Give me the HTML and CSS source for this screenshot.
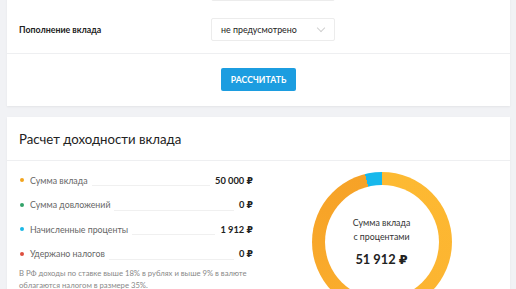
FILE: index.html
```html
<!DOCTYPE html>
<html lang="ru">
<head>
  <meta charset="UTF-8" />
  <meta name="viewport" content="width=device-width, initial-scale=1.0"/>
  <title>Депозитный калькулятор</title>
  <link rel="stylesheet" href="styles.css">
</head>
<body>
  <div class="card calc-card">
    <div class="form-rows">
      <div class="form-row">
        <span class="form-label"></span>
        <div class="select select-prev"></div>
      </div>
      <div class="form-row">
        <label class="form-label">Пополнение вклада</label>
        <div class="select">не предусмотрено<span class="chevron"></span></div>
      </div>
    </div>
    <div class="calc-actions">
      <button type="button" class="calc-button">Рассчитать</button>
    </div>
  </div>

  <div class="card result-card">
    <h2 class="result-title">Расчет доходности вклада</h2>
    <div class="result-body">
      <div class="result-list">
        <div class="result-row">
          <span class="dot dot-orange"></span>
          <span class="result-label">Сумма вклада</span>
          <span class="result-line"></span>
          <span class="result-value">50 000 ₽</span>
        </div>
        <div class="result-row">
          <span class="dot dot-green"></span>
          <span class="result-label">Сумма довложений</span>
          <span class="result-line"></span>
          <span class="result-value">0 ₽</span>
        </div>
        <div class="result-row">
          <span class="dot dot-blue"></span>
          <span class="result-label">Начисленные проценты</span>
          <span class="result-line"></span>
          <span class="result-value">1 912 ₽</span>
        </div>
        <div class="result-row">
          <span class="dot dot-red"></span>
          <span class="result-label">Удержано налогов</span>
          <span class="result-line"></span>
          <span class="result-value">0 ₽</span>
        </div>
        <p class="result-note">В РФ доходы по ставке выше 18% в рублях и выше 9% в валюте облагаются налогом в размере 35%.</p>
      </div>
      <div class="chart-col">
        <div class="donut">
          <div class="donut-inner">
            <span class="donut-caption">Сумма вклада<br>с процентами</span>
            <span class="donut-total">51 912 ₽</span>
          </div>
        </div>
      </div>
    </div>
  </div>
</body>
</html>
```

FILE: styles.css
```css
body {
  margin: 0;
  padding: 0 6px 20px 7px;
  background: #f1f2f5;
  font-family: 'Lato', 'DejaVu Sans', sans-serif;
  color: #222;
}

.card {
  background: #fff;
  box-shadow: 0 1px 2px rgba(0, 0, 0, 0.06);
}

.calc-card {
  margin-top: -22px;
}

.form-rows {
  display: flex;
  flex-direction: column;
  gap: 17px;
  padding: 0 12px 12px;
}

.form-row {
  display: flex;
  align-items: center;
}

.form-label {
  flex: none;
  width: 192px;
  font-size: 8.8px;
  font-weight: bold;
  color: #222;
}

.select {
  box-sizing: border-box;
  width: 124px;
  height: 23px;
  padding: 0 9px;
  display: flex;
  align-items: center;
  justify-content: space-between;
  border: 1px solid #ececec;
  border-radius: 2px;
  font-size: 8.9px;
  color: #222;
}

.chevron {
  width: 5px;
  height: 5px;
  border-right: 1px solid #d0d0d0;
  border-bottom: 1px solid #d0d0d0;
  transform: rotate(45deg);
  margin: -3px 1px 0 0;
}

.calc-actions {
  border-top: 1px solid #eeeff1;
  padding: 14px 0 15px;
  display: flex;
  justify-content: center;
}

.calc-button {
  height: 23px;
  width: 75px;
  padding: 0;
  border: none;
  border-radius: 2px;
  background: #1c9de0;
  color: #fff;
  font-family: inherit;
  font-size: 8.6px;
  font-weight: bold;
  letter-spacing: 0.1px;
  text-transform: uppercase;
}

.result-card {
  margin-top: 11px;
}

.result-title {
  margin: 0;
  padding: 0 12px;
  height: 43px;
  line-height: 45px;
  font-size: 13.2px;
  font-weight: normal;
  color: #222;
  border-bottom: 1px solid #eeeff1;
}

.result-body {
  display: grid;
  grid-template-columns: 234px 1fr;
  padding: 7px 0 0 12px;
}

.result-row {
  display: flex;
  align-items: center;
  height: 24.5px;
  font-size: 8.8px;
}

.dot {
  width: 4px;
  height: 4px;
  border-radius: 50%;
  margin: 0 6px 0 1px;
}

.dot-orange { background: #f2a41e; }
.dot-green { background: #33a36a; }
.dot-blue { background: #1ab7e6; }
.dot-red { background: #dd4f3f; }

.result-label {
  color: #666;
}

.result-line {
  flex: 1;
  height: 1px;
  background: #f0f0f0;
  margin: 11px 5px 0 4px;
}

.result-value {
  font-size: 9.3px;
  font-weight: bold;
  color: #222;
}

.result-note {
  margin: 1px 0 0;
  font-size: 7.7px;
  line-height: 12px;
  color: #888;
}

.chart-col {
  display: flex;
  justify-content: center;
  padding-top: 4px;
}

.donut {
  width: 140px;
  height: 140px;
  border-radius: 50%;
  background: conic-gradient(#fdba32 0deg, #fcb431 150deg, #f7a428 300deg, #f6a227 346deg, #17b8ec 346deg, #17b8ec 360deg);
  display: flex;
  align-items: center;
  justify-content: center;
}

.donut-inner {
  width: 114px;
  height: 114px;
  border-radius: 50%;
  background: #fff;
  display: flex;
  flex-direction: column;
  align-items: center;
  justify-content: center;
  text-align: center;
}

.donut-caption {
  font-size: 8.8px;
  line-height: 14px;
  color: #333;
  margin-top: -2px;
}

.donut-total {
  margin-top: 7px;
  font-size: 12.8px;
  font-weight: bold;
  color: #222;
}
```
